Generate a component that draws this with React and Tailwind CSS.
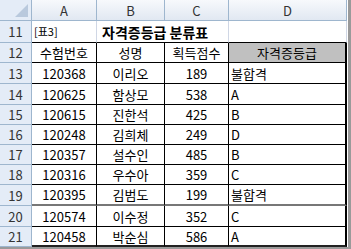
import React from 'react';

const rows = [
  { n: 13, h: 'h-[21px]', id: '120368', name: '이리오', score: 189, grade: '불합격' },
  { n: 14, h: 'h-[21px]', id: '120625', name: '함상모', score: 538, grade: 'A' },
  { n: 15, h: 'h-[20px]', id: '120615', name: '진한석', score: 425, grade: 'B' },
  { n: 16, h: 'h-[20px]', id: '120248', name: '김희체', score: 249, grade: 'D' },
  { n: 17, h: 'h-[20px]', id: '120357', name: '설수인', score: 485, grade: 'B' },
  { n: 18, h: 'h-[20px]', id: '120316', name: '우수아', score: 359, grade: 'C' },
  { n: 19, h: 'h-[21px]', id: '120395', name: '김범도', score: 199, grade: '불합격' },
  { n: 20, h: 'h-[21px]', id: '120574', name: '이수정', score: 352, grade: 'C' },
  { n: 21, h: 'h-[20px]', id: '120458', name: '박순심', score: 586, grade: 'A' },
];

const font = { fontFamily: '"Noto Sans CJK KR", "Liberation Sans", sans-serif' };

const RowHead = ({ children }) => (
  <div className="w-[32px] shrink-0 h-full flex items-center justify-center bg-[#e4ecf7] border-r border-b border-[#9eb6ce] text-[13px] text-[#333]">
    {children}
  </div>
);

const Cell = ({ children, w, bottom, align = 'center', className = '' }) => (
  <div
    className={`${w} shrink-0 h-full flex items-center border-r border-r-black ${bottom} ${
      align === 'left' ? 'justify-start pl-[2px]' : 'justify-center'
    } ${className}`}
  >
    {children}
  </div>
);

export default function App() {
  return (
    <div className="w-[351px] h-[249px] bg-white overflow-hidden border-r-[3px] border-b-[2px] border-[#9a9a9a]">
      <div className="text-[13px] text-black leading-none" style={font}>
        {/* column header */}
        <div className="flex h-[21px]">
          <div className="w-[32px] shrink-0 relative bg-[#e4ecf7] border-r border-b border-[#9eb6ce]">
            <div className="absolute right-[3px] bottom-[3px] w-0 h-0 border-l-[13px] border-l-transparent border-b-[13px] border-b-[#b9c9dd]" />
          </div>
          {[
            ['A', 'w-[65px]'],
            ['B', 'w-[68px]'],
            ['C', 'w-[64px]'],
            ['D', 'w-[118px]'],
          ].map(([l, w]) => (
            <div
              key={l}
              className={`${w} shrink-0 flex items-center justify-center bg-gradient-to-b from-[#f7f9fc] to-[#e1e8f2] border-r border-b border-[#9eb6ce] text-[#333]`}
            >
              {l}
            </div>
          ))}
        </div>

        {/* row 11 */}
        <div className="flex h-[22px]">
          <RowHead>11</RowHead>
          <div className="w-[65px] shrink-0 flex items-center pl-[2px] text-[11px] border-r border-[#d0d7e5] border-b border-b-black">[표3]</div>
          <div className="w-[132px] shrink-0 flex items-center pl-[5px] font-bold text-[14px] whitespace-nowrap border-r border-[#d0d7e5] border-b border-b-black">자격증등급 분류표</div>
          <div className="w-[118px] shrink-0 border-r border-r-[#d0d7e5] border-b border-b-black" />
        </div>

        {/* row 12 */}
        <div className="flex h-[20px]">
          <RowHead>12</RowHead>
          <Cell w="w-[65px]" bottom="border-b border-b-black">수험번호</Cell>
          <Cell w="w-[68px]" bottom="border-b border-b-black">성명</Cell>
          <Cell w="w-[64px]" bottom="border-b border-b-black">획득점수</Cell>
          <Cell w="w-[118px]" bottom="border-b border-b-black" className="bg-[#c0c0c0] border-r-2 border-r-[#333]">자격증등급</Cell>
        </div>

        {rows.map((r) => {
          const bottom =
            r.n === 21
              ? 'border-b-2 border-b-[#222]'
              : r.n === 19
              ? 'border-b-2 border-b-[#777]'
              : 'border-b border-b-black';
          return (
            <div key={r.n} className={`flex ${r.h}`}>
              <RowHead>{r.n}</RowHead>
              <Cell w="w-[65px]" bottom={bottom}>{r.id}</Cell>
              <Cell w="w-[68px]" bottom={bottom}>{r.name}</Cell>
              <Cell w="w-[64px]" bottom={bottom}>{r.score}</Cell>
              <Cell w="w-[118px]" bottom={bottom} align="left" className="border-r-2 border-r-[#333]">
                {r.grade}
              </Cell>
            </div>
          );
        })}
      </div>
    </div>
  );
}
